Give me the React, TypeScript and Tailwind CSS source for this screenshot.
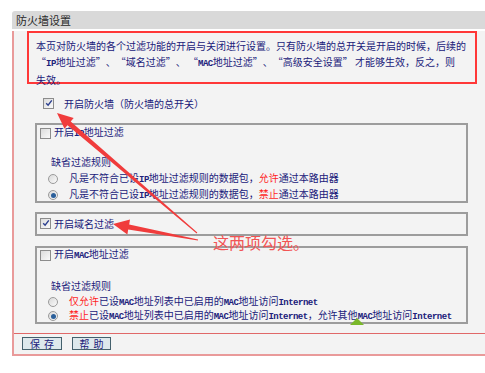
const cjk = "font-['Noto_Sans_CJK_SC','Noto_Sans',sans-serif]";

function Lat({ children }: { children: React.ReactNode }) {
  return <span className="font-['Liberation_Mono',monospace] text-[9px] tracking-[-0.5px] font-bold">{children}</span>;
}

function Q({ close }: { close?: boolean }) {
  return <span className={`inline-block w-[10px] ${close ? "text-left" : "text-right"}`}>{close ? "”" : "“"}</span>;
}

function Check({ checked }: { checked?: boolean }) {
  return (
    <span className="w-[11px] h-[11px] border border-[#8c8c8c] bg-gradient-to-br from-[#dcdcdc] to-[#fafafa] flex items-center justify-center shrink-0">
      {checked && (
        <svg width="8" height="8" viewBox="0 0 8 8">
          <path d="M1.2 4.2 L3.1 6.2 L6.8 1.3" stroke="#2b3f8f" strokeWidth="1.4" fill="none" />
        </svg>
      )}
    </span>
  );
}

function Radio({ checked }: { checked?: boolean }) {
  return (
    <span className="w-[10px] h-[10px] rounded-full border border-[#9a9a9a] bg-gradient-to-br from-[#d8d8d8] to-[#fbfbfb] flex items-center justify-center shrink-0">
      {checked && <span className="w-[5px] h-[5px] rounded-full bg-[#2b5f9a]" />}
    </span>
  );
}

export default function App() {
  const red = "text-[#ff1f1f]";

  return (
    <div className={`relative w-[485px] h-[373px] overflow-hidden bg-white pt-[11px] pl-[12px] ${cjk} text-[10px] text-[#20207a]`}>
      <div className="w-[480px]">
        <div className="h-[18px] bg-[#d9d9d9] rounded-tl-[3px] pl-[4px] leading-[18px] text-[11px] text-[#2a2a2a]">防火墙设置</div>

        <div className="bg-[#f3f3f3] border-l-2 border-b-2 border-[#e99a9a] pb-[4px]">
          {/* notice box */}
          <div className="mt-[2px] ml-[13px] w-[450px] h-[53px] border-2 border-[#ff3838] pt-[5px] pl-[7px] leading-[16px] whitespace-nowrap">
            <div>本页对防火墙的各个过滤功能的开启与关闭进行设置。只有防火墙的总开关是开启的时候，后续的</div>
            <div>
              <Q /><Lat>IP</Lat>地址过滤<Q close />、<Q />域名过滤<Q close />、 <Q /><Lat>MAC</Lat>地址过滤<Q close />、<Q />高级安全设置<Q close /> 才能够生效，反之，则
            </div>
            <div>失效。</div>
          </div>

          <div className="mt-[12px] ml-[29px] h-[14px] flex items-center gap-[10px]">
            <Check checked />
            <span>开启防火墙（防火墙的总开关）</span>
          </div>

          {/* IP filter */}
          <div className="mt-[13px] ml-[21px] w-[433px] h-[80px] border-2 border-[#9c9c9c]">
            <div className="mt-[1px] ml-[3px] h-[14px] flex items-center gap-[3px]">
              <Check />
              <span>开启<Lat>IP</Lat>地址过滤</span>
            </div>
            <div className="mt-[15px] ml-[14px] h-[14px] leading-[14px]">缺省过滤规则</div>
            <div className="mt-[2px] ml-[11px] h-[16px] flex items-center gap-[11px]">
              <Radio />
              <span>凡是不符合已设<Lat>IP</Lat>地址过滤规则的数据包，<span className={red}>允许</span>通过本路由器</span>
            </div>
            <div className="ml-[11px] h-[16px] flex items-center gap-[11px]">
              <Radio checked />
              <span>凡是不符合已设<Lat>IP</Lat>地址过滤规则的数据包，<span className={red}>禁止</span>通过本路由器</span>
            </div>
          </div>

          {/* domain filter */}
          <div className="mt-[9px] ml-[21px] w-[433px] h-[24px] border-2 border-[#9c9c9c]">
            <div className="mt-[2px] ml-[3px] h-[14px] flex items-center gap-[3px]">
              <Check checked />
              <span>开启域名过滤</span>
            </div>
          </div>

          {/* MAC filter */}
          <div className="mt-[10px] ml-[21px] w-[433px] h-[78px] border-2 border-[#9c9c9c]">
            <div className="ml-[3px] h-[14px] flex items-center gap-[3px]">
              <Check />
              <span>开启<Lat>MAC</Lat>地址过滤</span>
            </div>
            <div className="mt-[17px] ml-[14px] h-[14px] leading-[14px]">缺省过滤规则</div>
            <div className="mt-[2px] ml-[11px] h-[14px] flex items-center gap-[11px] whitespace-nowrap">
              <Radio />
              <span><span className={red}>仅允许</span>已设<Lat>MAC</Lat>地址列表中已启用的<Lat>MAC</Lat>地址访问<Lat>Internet</Lat></span>
            </div>
            <div className="ml-[11px] h-[14px] flex items-center gap-[11px] whitespace-nowrap">
              <Radio checked />
              <span><span className={red}>禁止</span>已设<Lat>MAC</Lat>地址列表中已启用的<Lat>MAC</Lat>地址访问<Lat>Internet</Lat>，允许其他<Lat>MAC</Lat>地址访问<Lat>Internet</Lat></span>
            </div>
          </div>

          <div className="mt-[9px] h-px bg-[#e06868]" />

          <div className="mt-[3px] ml-[8px] flex gap-[10px]">
            <button className="w-[40px] h-[13px] border border-[#44606c] bg-[#dde8ec] text-[10px] leading-[11px] tracking-[4px] pl-[4px] text-[#20207a]">保存</button>
            <button className="w-[39px] h-[13px] border border-[#44606c] bg-[#dde8ec] text-[10px] leading-[11px] tracking-[4px] pl-[4px] text-[#20207a]">帮助</button>
          </div>
        </div>
      </div>

      {/* annotation overlay */}
      <svg className="absolute left-0 top-0 pointer-events-none" width="485" height="373">
        <polygon fill="#f03c3c" points="197.3,232.6 70.7,121.5 73.7,118.1 57,113 64.5,128.7 67.5,125.3 196.7,233.4" />
        <polygon fill="#f03c3c" points="198.1,239.4 129.2,224.5 130,219.6 113,224 127.4,234.4 128.2,229.5 197.9,240.6" />
      </svg>
      <div className={`absolute left-[213px] top-[232px] text-[16px] leading-[20px] text-[#f25454] ${cjk}`}>这两项勾选。</div>
      <div className="absolute left-[350px] top-[318px] w-0 h-0 border-l-[7px] border-r-[7px] border-b-[7px] border-l-transparent border-r-transparent border-b-[#7ab82a]" />
    </div>
  );
}
